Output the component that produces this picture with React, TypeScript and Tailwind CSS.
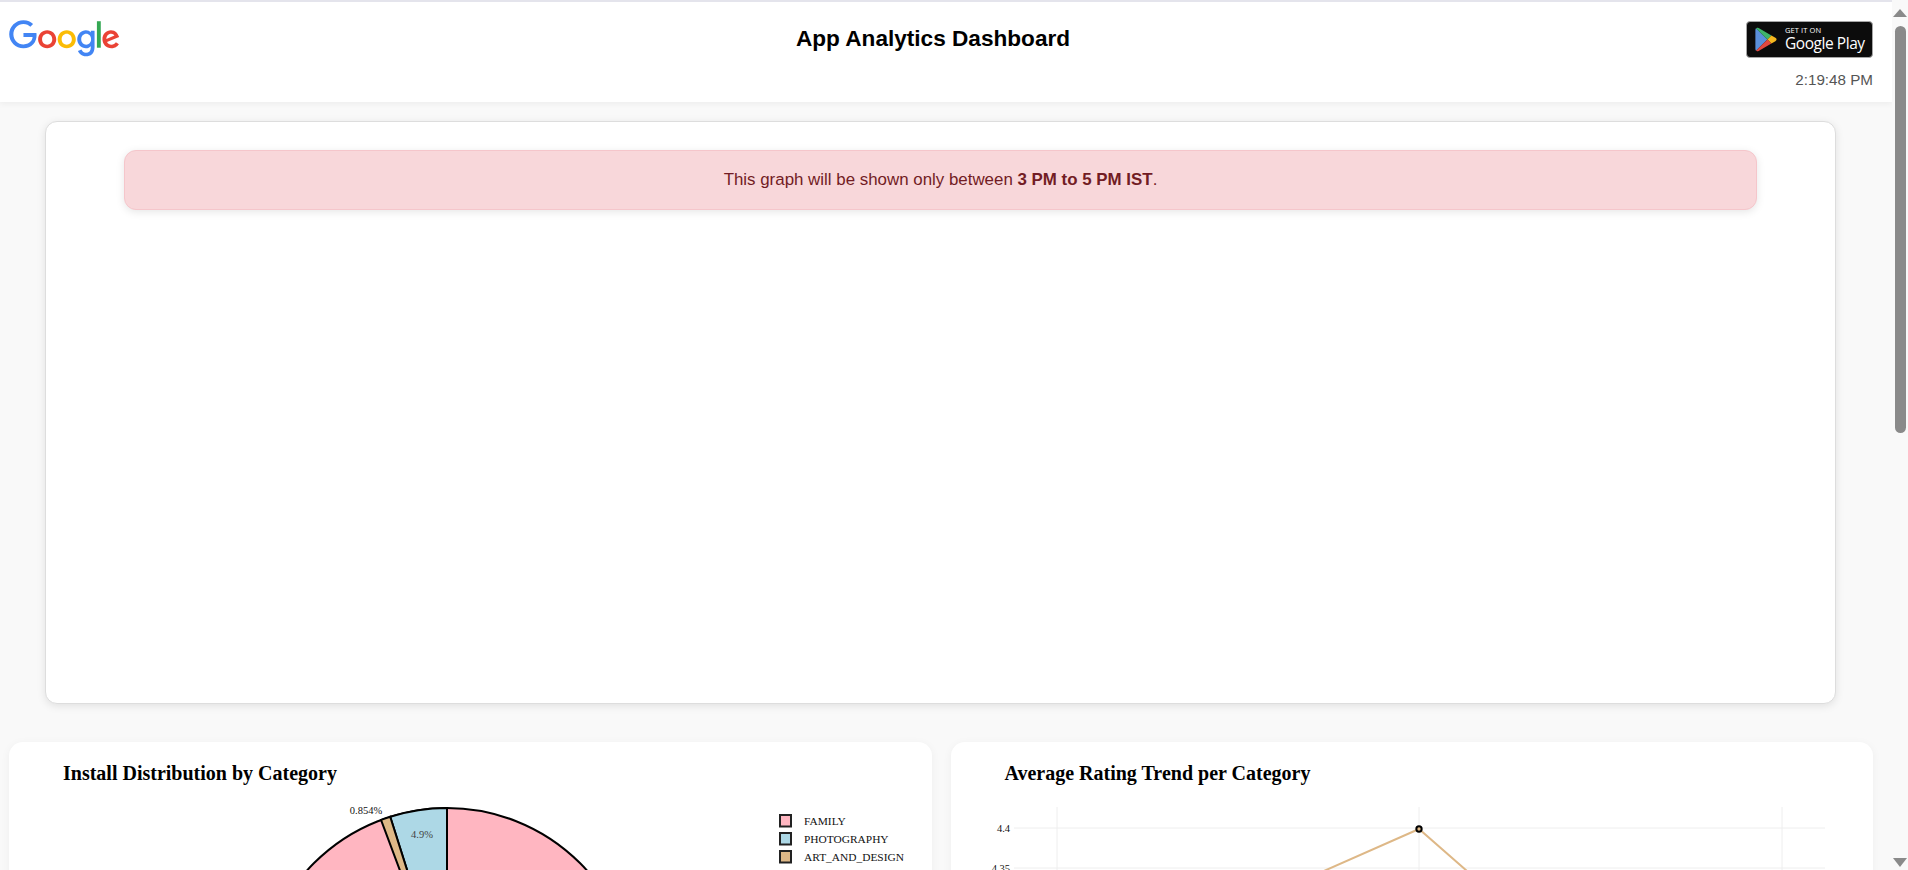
const LINE = '#deb887';

function GoogleLogo() {
  return (
    <svg viewBox="0 0 272 92" className="w-[111px] h-[37.5px] block">
      <path fill="#EA4335" d="M115.75 47.18c0 12.77-9.99 22.18-22.25 22.18s-22.25-9.41-22.25-22.18C71.25 34.32 81.24 25 93.5 25s22.25 9.32 22.25 22.18zm-9.74 0c0-7.98-5.79-13.44-12.51-13.44S80.99 39.2 80.99 47.18c0 7.9 5.79 13.44 12.51 13.44s12.51-5.55 12.51-13.44z" />
      <path fill="#FBBC05" d="M163.75 47.18c0 12.77-9.99 22.18-22.25 22.18s-22.25-9.41-22.25-22.18c0-12.85 9.99-22.18 22.25-22.18s22.25 9.32 22.25 22.18zm-9.74 0c0-7.98-5.79-13.44-12.51-13.44s-12.51 5.46-12.51 13.44c0 7.9 5.79 13.44 12.51 13.44s12.51-5.55 12.51-13.44z" />
      <path fill="#4285F4" d="M209.75 26.34v39.82c0 16.38-9.66 23.07-21.08 23.07-10.75 0-17.22-7.19-19.66-13.07l8.48-3.53c1.51 3.61 5.21 7.87 11.17 7.87 7.31 0 11.84-4.51 11.84-13v-3.19h-.34c-2.18 2.69-6.38 5.04-11.68 5.04-11.09 0-21.25-9.66-21.25-22.09 0-12.52 10.16-22.26 21.25-22.26 5.29 0 9.49 2.35 11.68 4.96h.34v-3.61h9.25zm-8.56 20.92c0-7.81-5.21-13.52-11.84-13.52-6.72 0-12.35 5.71-12.35 13.52 0 7.73 5.63 13.36 12.35 13.36 6.63 0 11.84-5.63 11.84-13.36z" />
      <path fill="#34A853" d="M225 3v65h-9.5V3h9.5z" />
      <path fill="#EA4335" d="M262.02 54.48l7.56 5.04c-2.44 3.61-8.32 9.83-18.48 9.83-12.6 0-22.01-9.74-22.01-22.18 0-13.19 9.49-22.18 20.92-22.18 11.51 0 17.14 9.16 18.98 14.11l1.01 2.52-29.65 12.28c2.27 4.45 5.8 6.72 10.75 6.72 4.96 0 8.4-2.44 10.92-6.14zm-23.27-7.98l19.82-8.23c-1.09-2.77-4.37-4.7-8.23-4.7-4.95 0-11.84 4.37-11.59 12.93z" />
      <path fill="#4285F4" d="M35.29 41.41V32H67c.31 1.64.47 3.58.47 5.68 0 7.06-1.93 15.79-8.15 22.01-6.05 6.3-13.78 9.66-24.02 9.66C16.32 69.35.36 53.89.36 34.91.36 15.93 16.32.47 35.3.47c10.5 0 17.98 4.12 23.6 9.49l-6.64 6.64c-4.03-3.78-9.49-6.72-16.97-6.72-13.86 0-24.7 11.17-24.7 25.03 0 13.86 10.84 25.03 24.7 25.03 8.99 0 14.11-3.61 17.39-6.89 2.66-2.66 4.41-6.46 5.1-11.65l-22.49.01z" />
    </svg>
  );
}

function PlayBadge() {
  return (
    <div className="w-[127px] h-[37px] bg-[#0c0c0c] border border-[#a6a6a6] rounded-[4px] flex items-center pl-[8px] gap-[8px] text-white font-['Open_Sans',sans-serif]">
      <svg viewBox="0 0 22 25" className="w-[22px] h-[25px] shrink-0">
        <path fill="#5a8fdb" d="M1 1.2 C0.6 1.6 0.4 2.2 0.4 3 V22 C0.4 22.8 0.6 23.4 1 23.8 L12.4 12.5 Z" />
        <path fill="#3fb36b" d="M1 1.2 C1.6 0.6 2.6 0.5 3.6 1.1 L16.4 8.5 L12.4 12.5 Z" />
        <path fill="#f5b81f" d="M16.4 8.5 L20.4 10.8 C22 11.7 22 13.3 20.4 14.2 L16.4 16.5 L12.4 12.5 Z" />
        <path fill="#e2483f" d="M1 23.8 C1.6 24.4 2.6 24.5 3.6 23.9 L16.4 16.5 L12.4 12.5 Z" />
      </svg>
      <div className="flex flex-col leading-none">
        <span className="text-[7.5px] leading-[8px] tracking-[0.1px]">GET IT ON</span>
        <span className="text-[15.5px] leading-[19px] tracking-[-0.45px] font-medium whitespace-nowrap">Google Play</span>
      </div>
    </div>
  );
}

function Header() {
  return (
    <header className="h-[100px] bg-white flex justify-between items-start pl-[9px] pr-[19px] shadow-[0_2px_6px_rgba(0,0,0,0.05)] relative">
      <div className="pt-[18px]">
        <GoogleLogo />
      </div>
      <h1 className="pt-[21px] text-[22.6px] leading-[32px] font-bold text-black">App Analytics Dashboard</h1>
      <div className="pt-[19px] flex flex-col items-end">
        <PlayBadge />
        <div className="mt-[12px] text-[15.2px] leading-[20px] text-[#555]">2:19:48 PM</div>
      </div>
    </header>
  );
}

function PieCard() {
  const swatches = [
    { y: 15, fill: '#ffb6c1', label: 'FAMILY' },
    { y: 33, fill: '#add8e6', label: 'PHOTOGRAPHY' },
    { y: 51, fill: '#deb887', label: 'ART_AND_DESIGN' },
  ];
  return (
    <svg width="922" height="400" className="block font-['Liberation_Serif',serif]">
      <circle cx="438" cy="196" r="188" fill="#ffb6c1" stroke="#000" strokeWidth="2" />
      <path d="M438 196 V8 A188 188 0 0 0 381.2 16.8 Z" fill="#add8e6" stroke="#000" strokeWidth="2" />
      <path d="M438 196 L381.2 16.8 A188 188 0 0 0 372 19.9 Z" fill="#deb887" stroke="#000" strokeWidth="2" />
      <text x="413" y="38" textAnchor="middle" fontSize="10.5" fill="#444">4.9%</text>
      <text x="357" y="14" textAnchor="middle" fontSize="10.5" fill="#111">0.854%</text>
      {swatches.map((s) => (
        <g key={s.label}>
          <rect x="771" y={s.y} width="11" height="11.5" fill={s.fill} stroke="#222" strokeWidth="2" />
          <text x="795" y={s.y + 9.5} fontSize="11.4" fill="#111">{s.label}</text>
        </g>
      ))}
    </svg>
  );
}

function TrendCard() {
  return (
    <svg width="922" height="400" className="block font-['Liberation_Serif',serif]">
      <g stroke="#eeeeee" strokeWidth="1">
        <line x1="106" y1="7" x2="106" y2="400" />
        <line x1="468" y1="7" x2="468" y2="400" />
        <line x1="831" y1="7" x2="831" y2="400" />
        <line x1="63" y1="28" x2="874" y2="28" />
        <line x1="63" y1="68" x2="874" y2="68" />
      </g>
      <polyline points="280,112 468,29 564,113" fill="none" stroke={LINE} strokeWidth="2" />
      <circle cx="468" cy="29" r="2.65" fill={LINE} stroke="#000" strokeWidth="2" />
      <text x="59" y="32" textAnchor="end" fontSize="10.5" fill="#111">4.4</text>
      <text x="59" y="72" textAnchor="end" fontSize="10.5" fill="#111">4.35</text>
    </svg>
  );
}

function ChartCard({ title, children }: { title: string; children: React.ReactNode }) {
  return (
    <section className="bg-white rounded-[14px] shadow-[0_2px_10px_rgba(0,0,0,0.05)] h-[480px]">
      <h2 className="pt-[19px] pl-[54px] h-[58px] text-[20px] leading-[24px] font-bold text-black font-['Liberation_Serif',serif]">{title}</h2>
      {children}
    </section>
  );
}

function Scrollbar() {
  return (
    <div className="w-[16px] shrink-0 bg-[#f9f9f9] flex flex-col items-center pt-[9px] pb-[3px]">
      <div className="w-0 h-0 border-x-[7px] border-x-transparent border-b-[8px] border-b-[#8a8a8a]" />
      <div className="mt-[9px] w-[11px] h-[407px] bg-[#8a8a8a] rounded-full" />
      <div className="mt-auto w-0 h-0 border-x-[7px] border-x-transparent border-t-[9px] border-t-[#8a8a8a]" />
    </div>
  );
}

export default function App() {
  return (
    <div className="h-screen overflow-hidden flex bg-[#f9f9f9] font-['Liberation_Sans',Arial,sans-serif]">
      <div className="flex-1 min-w-0 overflow-hidden border-t-2 border-[#e4e4ec]">
        <Header />
        <main className="pt-[19px]">
          <div className="ml-[45px] w-[1791px] h-[583px] bg-white border border-[#dddddd] rounded-[12px] shadow-[0_2px_8px_rgba(0,0,0,0.1)] px-[78px] pt-[28px]">
            <div className="h-[60px] flex items-center justify-center bg-[#f8d7da] border border-[#f5c6cb] rounded-[12px] text-[16.9px] text-[#721c24] shadow-[0_2px_8px_rgba(0,0,0,0.1)]">
              <p>This graph will be shown only between <strong className="font-bold">3 PM to 5 PM IST</strong>.</p>
            </div>
          </div>
          <div className="mt-[38px] grid grid-cols-2 gap-[19px] pl-[9px] pr-[19px]">
            <ChartCard title="Install Distribution by Category">
              <PieCard />
            </ChartCard>
            <ChartCard title="Average Rating Trend per Category">
              <TrendCard />
            </ChartCard>
          </div>
        </main>
      </div>
      <Scrollbar />
    </div>
  );
}
